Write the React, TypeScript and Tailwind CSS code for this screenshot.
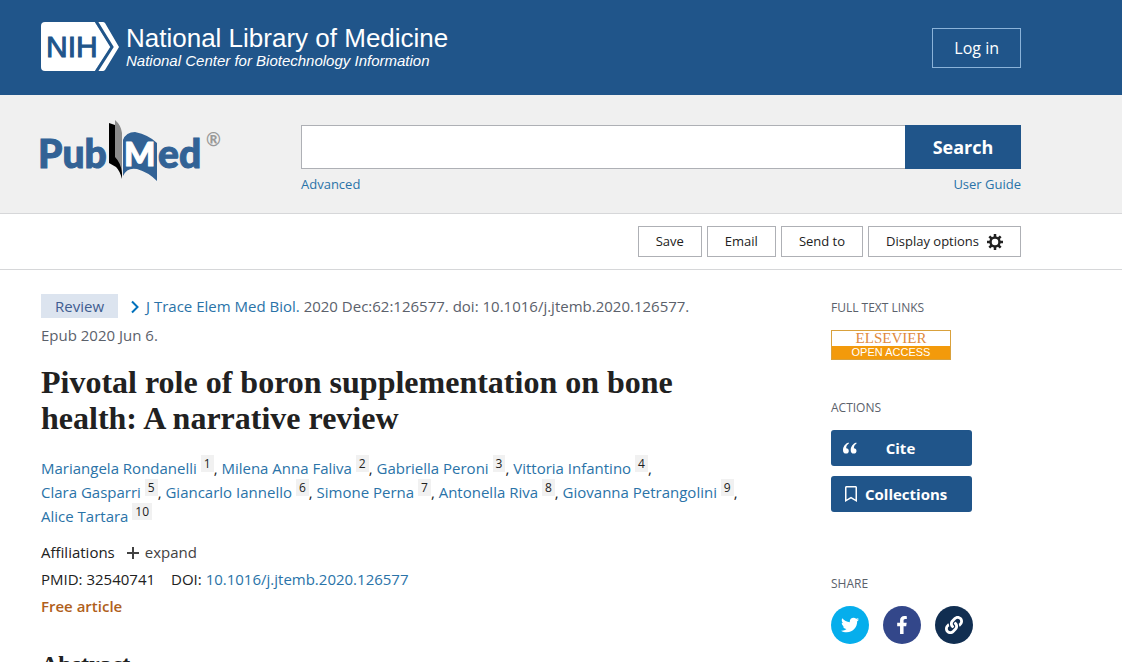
import React from 'react';
import { FaFacebookF, FaLink, FaRegBookmark, FaTwitter } from 'react-icons/fa';

const authors = [
  ['Mariangela Rondanelli', 'Milena Anna Faliva', 'Gabriella Peroni', 'Vittoria Infantino'],
  ['Clara Gasparri', 'Giancarlo Iannello', 'Simone Perna', 'Antonella Riva', 'Giovanna Petrangolini'],
  ['Alice Tartara'],
];

const NihLogo: React.FC = () => (
  <a href="#" className="flex items-center pb-[2px] text-white font-['Liberation_Sans',sans-serif]">
    <svg width="78" height="50" viewBox="0 0 78 50" aria-hidden="true">
      <path d="M4 0H54L70 25L54 49H4Q0 49 0 45V4Q0 0 4 0Z" fill="#fff" />
      <path d="M54 0H62Q63 0 64 1L78 25L64 48Q63 49 62 49H54L70 25Z" fill="#fff" />
      <path d="M55 -1L71 25L55 50" fill="none" stroke="#20558a" strokeWidth="3" />
      <text x="5" y="35" fontSize="30" fill="#20558a" stroke="#20558a" strokeWidth="1">
        NIH
      </text>
    </svg>
    <span className="ml-[7px]">
      <span className="block text-[26px] leading-7">National Library of Medicine</span>
      <span className="block text-[15px] leading-[18px] italic">National Center for Biotechnology Information</span>
    </span>
  </a>
);

const PubMedLogo: React.FC = () => (
  <a href="#" aria-label="PubMed" className="block w-[260px] shrink-0">
    <svg
      width="184"
      height="64"
      viewBox="0 0 184 64"
      className="overflow-visible"
      fontFamily="Lato, sans-serif"
      fontWeight="900"
    >
      <text x="-3" y="47" fontSize="39" fill="#326295" stroke="#326295" strokeWidth="1">Pub</text>
      <path d="M68 2L74 4V34L81 44V58Q79 50 75 46L68 42Z" fill="#000" />
      <path d="M74 -1Q80 4 81 12V52Q80 42 74 36Z" fill="#8c8c8c" />
      <path d="M82 19Q85 11 94 11Q108 14 116 22V60Q107 51 96 48Q86 46 82 55Z" fill="#326295" />
      <text x="83" y="45" fontSize="33" fill="#fff" stroke="#fff" strokeWidth="1">M</text>
      <text x="117" y="47" fontSize="39" fill="#326295" stroke="#326295" strokeWidth="1">ed</text>
      <text x="165" y="25" fontSize="18" fontWeight="700" fill="#999">®</text>
    </svg>
  </a>
);

const GearIcon: React.FC = () => (
  <svg width="16" height="16" viewBox="0 0 16 16" fill="none" stroke="currentColor" aria-hidden="true">
    <circle cx="8" cy="8" r="4.500" strokeWidth="2.500" />
    <path
      d="M8 0V3M8 13V16M0 8H3M13 8H16M2.300 2.300L4.500 4.500M11.500 11.500L13.700 13.700M13.700 2.300L11.500 4.500M4.500 11.500L2.300 13.700"
      strokeWidth="2.500"
    />
  </svg>
);

const QuoteIcon: React.FC = () => (
  <svg width="14" height="12" viewBox="0 0 14 12" fill="currentColor" aria-hidden="true">
    <path d="M5.500 0.500C2.500 1.500 0 4.500 0 8.200C0 10.300 1.200 11.600 3 11.600C4.700 11.600 5.800 10.400 5.800 8.900C5.800 7.400 4.700 6.300 3.200 6.300C3.100 4.300 4 2.500 5.900 1.400Z" />
    <path d="M13.200 0.500C10.200 1.500 7.700 4.500 7.700 8.200C7.700 10.300 8.900 11.600 10.700 11.600C12.400 11.600 13.500 10.400 13.500 8.900C13.500 7.400 12.400 6.300 10.900 6.300C10.800 4.300 11.700 2.500 13.600 1.400Z" />
  </svg>
);

const toolButton = 'flex h-[31px] items-center border border-[#aeb0b5] bg-white px-[17px] text-[13px] text-[#212121]';

const Article: React.FC = () => (
  <main className="min-w-0 flex-1">
    <p className="text-[15px] leading-[29px] text-[#5b616b]">
      <span className="mr-2 inline-block bg-[#dce4ef] px-[14px] leading-6 text-[#3f5d91]">Review</span>
      <a href="#" className="text-[#2a73a8]">
        <svg width="10" height="14" viewBox="0 0 10 14" className="mr-[6px] ml-1 inline align-[-2px]" aria-hidden="true">
          <path d="M2 1.500L7.500 7L2 12.500" fill="none" stroke="#0071bc" strokeWidth="2" />
        </svg>
        J Trace Elem Med Biol.
      </a>{' '}
      2020 Dec:62:126577. doi: 10.1016/j.jtemb.2020.126577.
      <br />
      Epub 2020 Jun 6.
    </p>

    <h1 className="mt-[14px] font-['Liberation_Serif',serif] text-[32px] leading-9 font-bold text-[#212121]">
      Pivotal role of boron supplementation on bone
      <br />
      health: A narrative review
    </h1>

    <div className="mt-5 text-[15px] leading-6 text-[#212121]">
      {authors.map((line, row) => {
        const start = authors.slice(0, row).flat().length;
        return (
          <div key={row}>
            {line.map((name, i) => (
              <span key={name}>
                <a href="#" className="text-[#2a73a8]">{name}</a>{' '}
                <sup className="top-[-6px] bg-[#f1f1f1] px-[3px] text-[12px] leading-4">
                  <a href="#">{start + i + 1}</a>
                </sup>
                {start + i < 9 && ', '}
              </span>
            ))}
          </div>
        );
      })}
    </div>

    <div className="mt-[11px] text-[15px] leading-[27px] text-[#212121]">
      <div className="flex items-center">
        Affiliations
        <button type="button" className="ml-3 flex items-center gap-[6px] text-[#424242]">
          <svg width="12" height="12" viewBox="0 0 12 12" aria-hidden="true">
            <path d="M6 0V12M0 6H12" stroke="currentColor" strokeWidth="2" />
          </svg>
          expand
        </button>
      </div>
      <div className="flex gap-4">
        <span>PMID: 32540741</span>
        <span>
          DOI: <a href="#" className="text-[#2a73a8]">10.1016/j.jtemb.2020.126577</a>
        </span>
      </div>
      <div className="font-semibold text-[#b0601b]">Free article</div>
    </div>

    <h2 className="mt-7 font-['Liberation_Serif',serif] text-[24px] leading-8 font-bold text-[#212121]">Abstract</h2>
  </main>
);

const Sidebar: React.FC = () => (
  <aside className="w-[190px] shrink-0 text-[12px] text-[#5b616b]">
    <h3 className="mt-[6px] leading-5">FULL TEXT LINKS</h3>
    <a
      href="#"
      className="mt-3 block h-[30px] w-[120px] border border-[#d9a13c] bg-white text-center font-['Liberation_Sans',sans-serif]"
    >
      <span className="block font-['Liberation_Serif',serif] text-[15px] leading-[15px] text-[#df8a3c]">ELSEVIER</span>
      <span className="block bg-[#f39a0b] text-[11px] leading-[13px] text-white">OPEN ACCESS</span>
    </a>

    <h3 className="mt-[38px] leading-5">ACTIONS</h3>
    <div className="mt-3 flex w-[141px] flex-col gap-[10px] text-[15px] font-bold text-white">
      <button type="button" className="flex h-9 items-center rounded-[3px] bg-[#20558a] px-3">
        <QuoteIcon />
        <span className="flex-1 pr-4 text-center">Cite</span>
      </button>
      <button type="button" className="flex h-9 items-center gap-2 rounded-[3px] bg-[#20558a] px-[14px]">
        <FaRegBookmark className="h-4 w-3" />
        Collections
      </button>
    </div>

    <h3 className="mt-[62px] leading-5">SHARE</h3>
    <div className="mt-3 flex gap-[14px] text-[18px] text-white">
      <a href="#" aria-label="Twitter" className="flex size-[38px] items-center justify-center rounded-full bg-[#06aeec]">
        <FaTwitter />
      </a>
      <a href="#" aria-label="Facebook" className="flex size-[38px] items-center justify-center rounded-full bg-[#33478a]">
        <FaFacebookF />
      </a>
      <a href="#" aria-label="Permalink" className="flex size-[38px] items-center justify-center rounded-full bg-[#112e51]">
        <FaLink />
      </a>
    </div>
  </aside>
);

const App: React.FC = () => {
  return (
    <div className="bg-white font-['Open_Sans',sans-serif]">
      <header className="flex h-[95px] items-center justify-between bg-[#20558a] pr-[101px] pl-[41px]">
        <NihLogo />
        <button type="button" className="h-10 border border-[#8bb3d9] px-[21px] text-[16px] text-white">
          Log in
        </button>
      </header>

      <section className="flex border-b border-[#d6d7d9] bg-[#f0f0f0] pt-[26px] pr-[101px] pb-[19px] pl-[41px]">
        <PubMedLogo />
        <form className="mt-1 flex-1" role="search">
          <div className="flex h-11">
            <input
              type="text"
              aria-label="Search term"
              className="min-w-0 flex-1 border border-r-0 border-[#aeb0b5] bg-white px-3"
            />
            <button type="submit" className="w-[116px] bg-[#20558a] text-[18px] font-bold text-white">
              Search
            </button>
          </div>
          <div className="mt-[5px] flex justify-between text-[13px] leading-5 text-[#2a73a8]">
            <a href="#">Advanced</a>
            <a href="#">User Guide</a>
          </div>
        </form>
      </section>

      <div className="flex justify-end gap-[5px] border-b border-[#d6d7d9] py-3 pr-[101px] pl-[41px]">
        <button type="button" className={toolButton}>Save</button>
        <button type="button" className={toolButton}>Email</button>
        <button type="button" className={toolButton}>Send to</button>
        <button type="button" className={toolButton + ' gap-2'}>
          Display options
          <GearIcon />
        </button>
      </div>

      <div className="flex gap-[50px] pt-[22px] pr-[101px] pl-[41px]">
        <Article />
        <Sidebar />
      </div>
    </div>
  );
};

export default App;
